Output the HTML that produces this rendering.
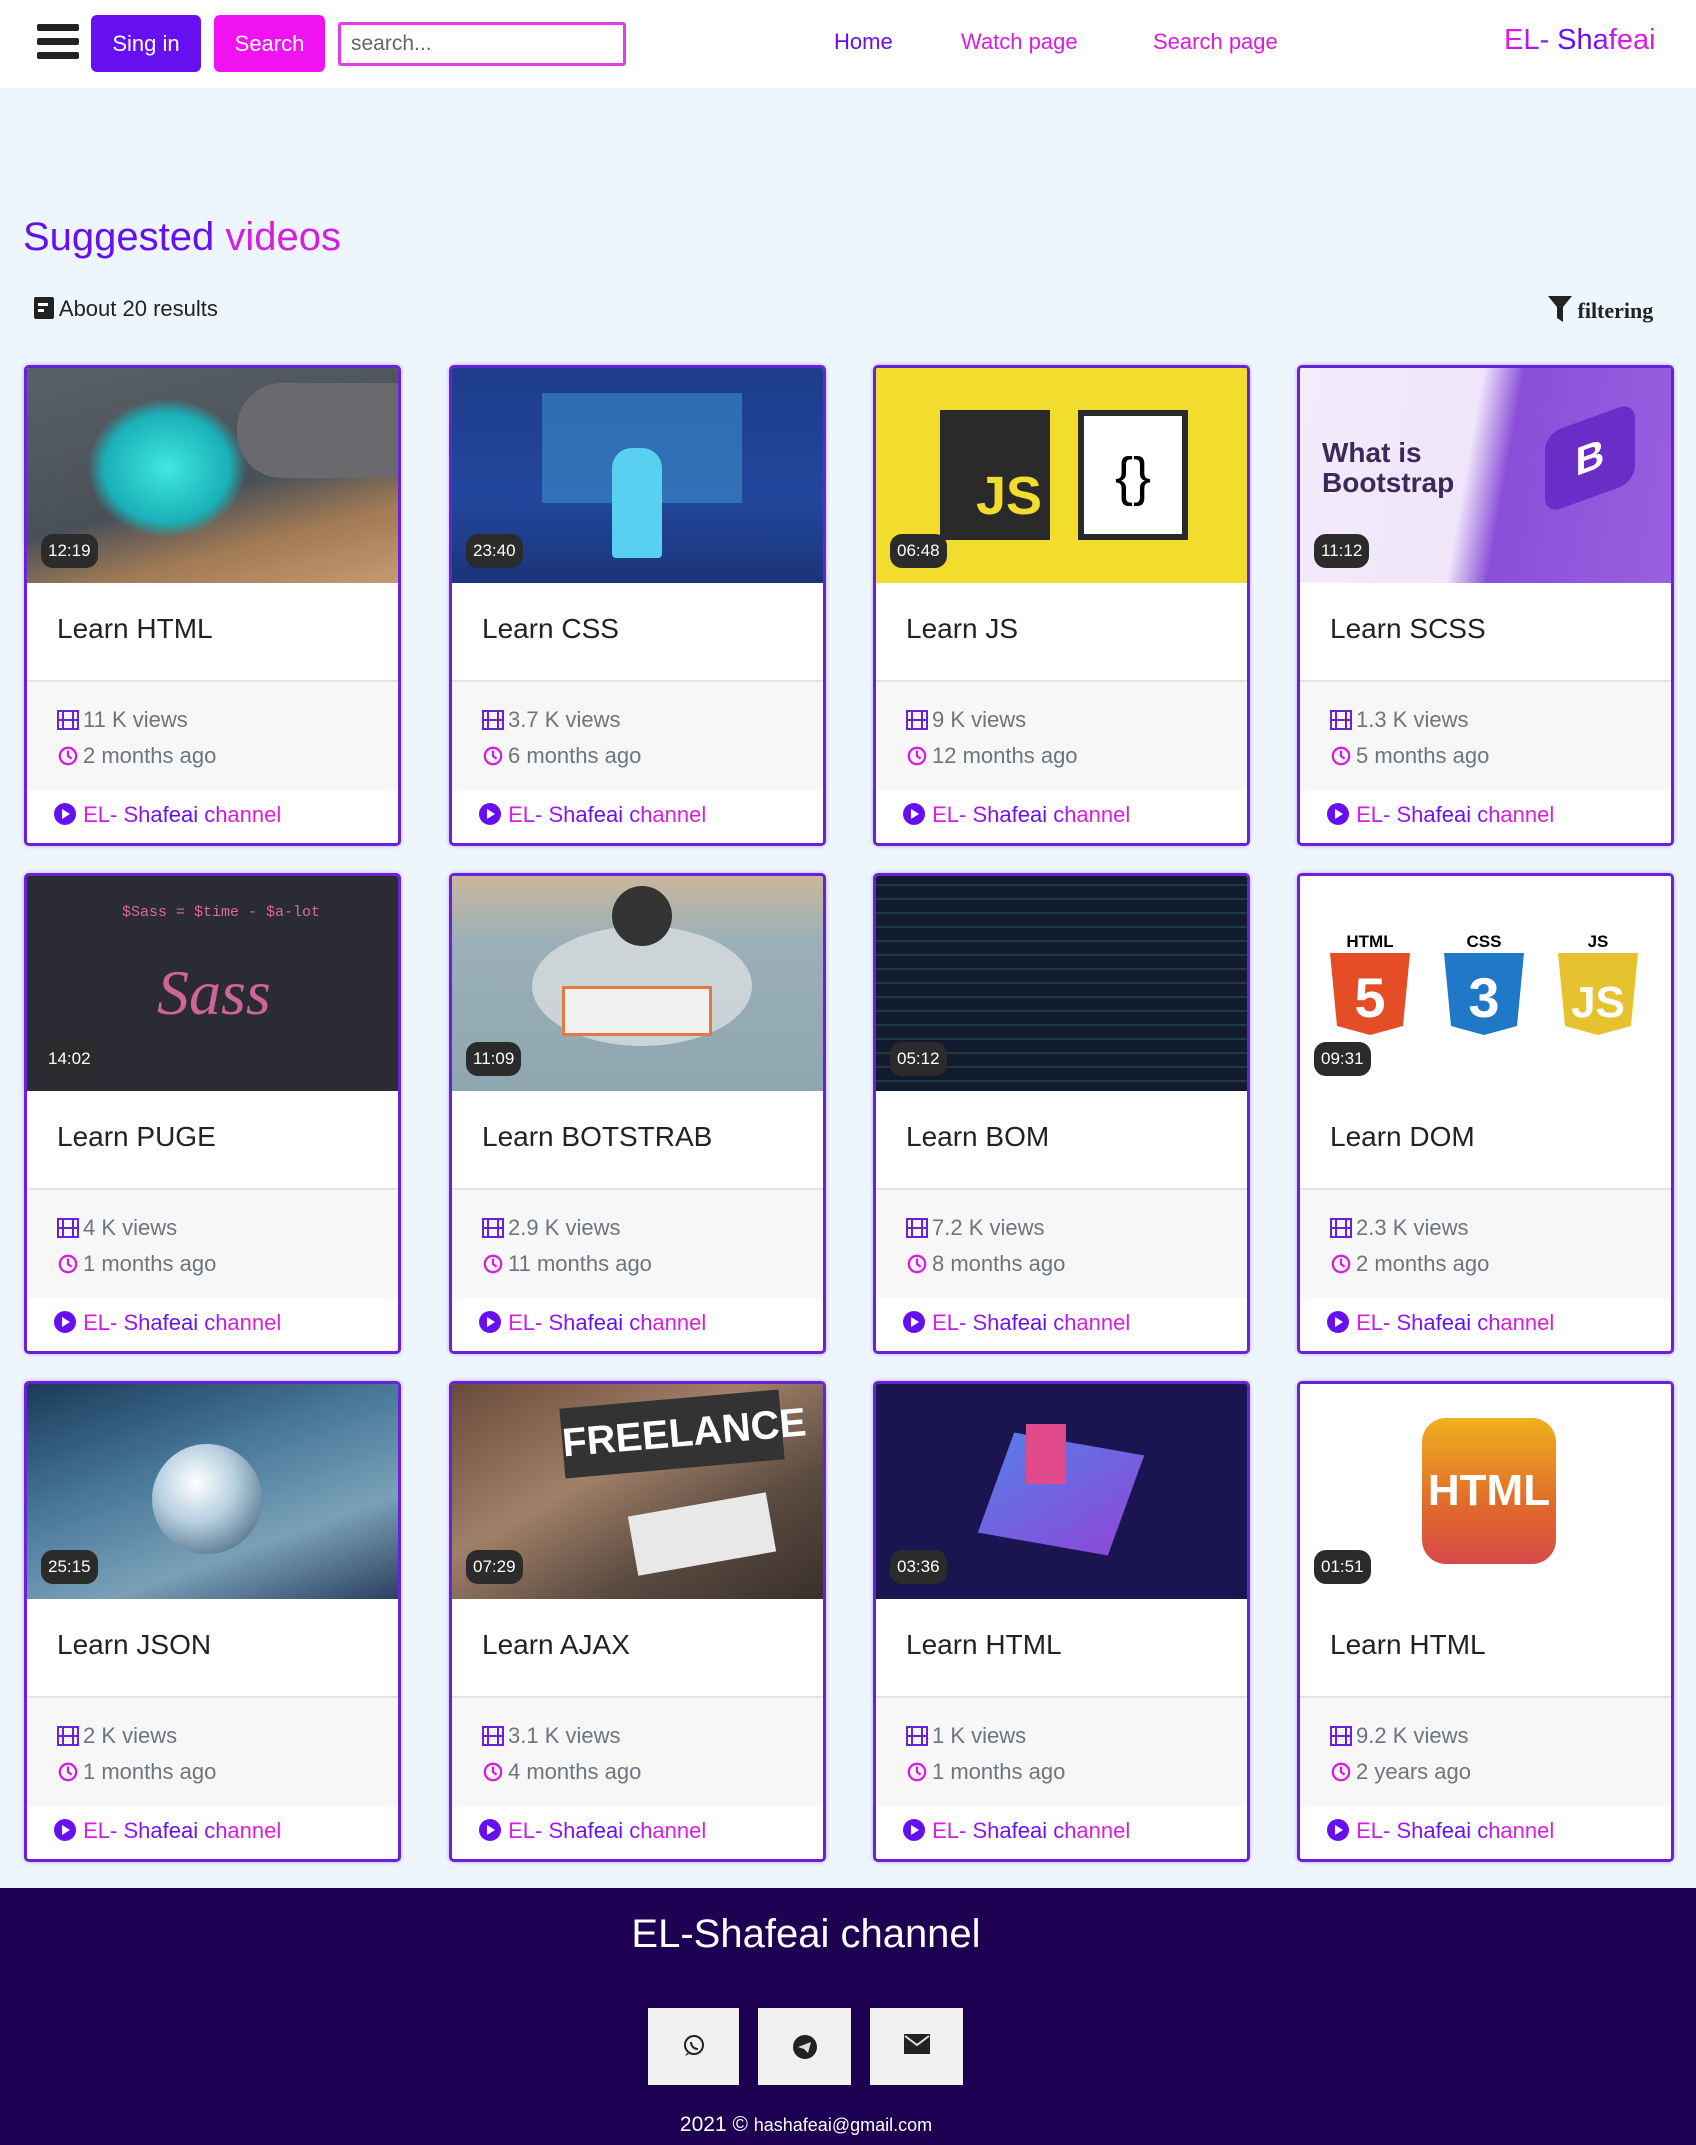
<!DOCTYPE html>
<html><head><meta charset="utf-8"><style>
*{box-sizing:border-box;margin:0;padding:0}
body{width:1696px;height:2145px;background:#eef6fd;font-family:"Liberation Sans",sans-serif;position:relative;overflow:hidden}
.nav{position:absolute;left:0;top:0;width:1696px;height:88px;background:#fff}
.ham{position:absolute;left:37px;top:24px;width:42px}
.ham i{display:block;height:7px;background:#222;border-radius:2px;margin-bottom:7px}
.btn{position:absolute;top:15px;height:57px;border-radius:6px;color:#fff;font-size:22px;line-height:57px;text-align:center}
.inp{position:absolute;left:338px;top:22px;width:288px;height:44px;border:3px solid #e23ee6;border-radius:3px;font-size:21px;color:#666;line-height:38px;padding-left:10px}
.nl{position:absolute;top:29px;font-size:22px}
.grad{background:linear-gradient(90deg,#e61ee6 0%,#6610f2 40%,#6610f2 58%,#d61ee0 75%);-webkit-background-clip:text;background-clip:text;color:transparent}
h1{position:absolute;left:23px;top:215px;font-size:40px;font-weight:normal}
.res{position:absolute;left:34px;top:296px;font-size:22px;color:#222}
.filt{position:absolute;left:1548px;top:296px;font-family:"Liberation Serif",serif;font-weight:bold;font-size:22px;color:#222}
.card{position:absolute;width:377px;height:481px;border:3px solid #6a22d8;border-radius:5px;background:#fff;overflow:hidden;box-shadow:0 0 4px rgba(120,60,220,.4)}
.th{position:absolute;left:0;top:0;width:100%;height:215px;overflow:hidden}
.dur{position:absolute;left:14px;top:166px;background:#2b2b2b;color:#fff;font-size:17px;padding:7px 7px;border-radius:12px}
.tt{position:absolute;left:30px;top:245px;font-size:28px;color:#222}
.st{position:absolute;left:0;top:312px;width:100%;height:110px;background:#f7f7f7;border-top:2px solid #e3e3e3;color:#6c757d;font-size:22px;padding:20px 0 0 30px;line-height:36px}
.ic{display:inline-block;width:22px;height:20px;vertical-align:-3px;margin-right:4px}
.ch{position:absolute;left:26px;top:434px;font-size:22px}
.foot{position:absolute;left:0;top:1888px;width:1696px;height:257px;background:#1e0052}
.fb{position:absolute;top:2008px;height:77px;background:#f0f0f0;text-align:center;padding-top:26px}
.ab{position:absolute}
</style></head><body>
<div class="nav">
<div class="ham"><i></i><i></i><i></i></div>
<div class="btn" style="left:91px;width:110px;background:#6610f2">Sing in</div>
<div class="btn" style="left:214px;width:111px;background:#f012f0">Search</div>
<div class="inp">search...</div>
<div class="nl" style="left:834px;color:#6610f2">Home</div>
<div class="nl" style="left:961px;color:#d61ee0">Watch page</div>
<div class="nl" style="left:1153px;color:#d61ee0">Search page</div>
<div class="nl grad" style="left:1504px;top:24px;font-size:29px">EL- Shafeai</div>
</div>
<h1><span style="color:#6610f2">Suggested</span> <span style="color:#d61ee0">videos</span></h1>
<div class="res"><svg width="20" height="22" viewBox="0 0 20 22" style="vertical-align:-3px"><rect width="20" height="22" rx="2" fill="#222"/><rect x="4" y="6" width="10" height="3" fill="#fff"/><rect x="4" y="12" width="6" height="3" fill="#fff"/></svg> About 20 results</div>
<div class="filt"><svg width="24" height="26" viewBox="0 0 24 26" style="vertical-align:-4px"><path d="M0 0H24L15 11V26L9 22V11Z" fill="#222"/></svg> filtering</div>

<div class="card" style="left:24px;top:365px"><div class="th" style="background:linear-gradient(165deg,#5a6068 0%,#4a5058 55%,#a07a55 75%,#c49a70 100%)"><div class="ab" style="left:60px;top:30px;width:160px;height:140px;background:radial-gradient(#40e8e0,#1ab0b8 55%,transparent 70%)"></div><div class="ab" style="left:210px;top:15px;width:170px;height:95px;background:#6a6a6e;border-radius:45px 0 0 45px"></div></div><div class="dur">12:19</div><div class="tt">Learn HTML</div>
<div class="st"><div><svg class="ic" viewBox="0 0 22 20"><rect x="1" y="1" width="20" height="18" fill="none" stroke="#6a22d8" stroke-width="2"/><path d="M6 1V19M16 1V19M1 10H21" stroke="#6a22d8" stroke-width="2"/></svg>11 K views</div><div><svg class="ic" viewBox="0 0 22 22"><circle cx="11" cy="11" r="9" fill="none" stroke="#d61ee0" stroke-width="2.5"/><path d="M11 5V11L15 14" fill="none" stroke="#d61ee0" stroke-width="2.5"/></svg>2 months ago</div></div>
<div class="ch"><svg width="24" height="24" viewBox="0 0 24 24" style="vertical-align:-4px"><circle cx="12" cy="12" r="11" fill="#6610f2"/><path d="M9 7L17 12L9 17Z" fill="#fff"/></svg> <span class="grad">EL- Shafeai channel</span></div></div>

<div class="card" style="left:449px;top:365px"><div class="th" style="background:linear-gradient(180deg,#1d3c8a,#23479e 60%,#1a3478)"><div class="ab" style="left:90px;top:25px;width:200px;height:110px;background:#3a8ec8;opacity:.6"></div><div class="ab" style="left:160px;top:80px;width:50px;height:110px;background:#5ad0f0;border-radius:20px 20px 4px 4px"></div></div><div class="dur">23:40</div><div class="tt">Learn CSS</div>
<div class="st"><div><svg class="ic" viewBox="0 0 22 20"><rect x="1" y="1" width="20" height="18" fill="none" stroke="#6a22d8" stroke-width="2"/><path d="M6 1V19M16 1V19M1 10H21" stroke="#6a22d8" stroke-width="2"/></svg>3.7 K views</div><div><svg class="ic" viewBox="0 0 22 22"><circle cx="11" cy="11" r="9" fill="none" stroke="#d61ee0" stroke-width="2.5"/><path d="M11 5V11L15 14" fill="none" stroke="#d61ee0" stroke-width="2.5"/></svg>6 months ago</div></div>
<div class="ch"><svg width="24" height="24" viewBox="0 0 24 24" style="vertical-align:-4px"><circle cx="12" cy="12" r="11" fill="#6610f2"/><path d="M9 7L17 12L9 17Z" fill="#fff"/></svg> <span class="grad">EL- Shafeai channel</span></div></div>

<div class="card" style="left:873px;top:365px"><div class="th" style="background:#f2dc2e"><div class="ab" style="left:64px;top:42px;width:110px;height:130px;background:#2a2a2a;color:#f2dc2e;font-size:54px;font-weight:bold;text-align:right;padding:56px 8px 0 0;line-height:60px">JS</div><div class="ab" style="left:202px;top:42px;width:110px;height:130px;background:#fff;border:6px solid #2a2a2a;font-size:54px;text-align:center;padding-top:30px">{}</div></div><div class="dur">06:48</div><div class="tt">Learn JS</div>
<div class="st"><div><svg class="ic" viewBox="0 0 22 20"><rect x="1" y="1" width="20" height="18" fill="none" stroke="#6a22d8" stroke-width="2"/><path d="M6 1V19M16 1V19M1 10H21" stroke="#6a22d8" stroke-width="2"/></svg>9 K views</div><div><svg class="ic" viewBox="0 0 22 22"><circle cx="11" cy="11" r="9" fill="none" stroke="#d61ee0" stroke-width="2.5"/><path d="M11 5V11L15 14" fill="none" stroke="#d61ee0" stroke-width="2.5"/></svg>12 months ago</div></div>
<div class="ch"><svg width="24" height="24" viewBox="0 0 24 24" style="vertical-align:-4px"><circle cx="12" cy="12" r="11" fill="#6610f2"/><path d="M9 7L17 12L9 17Z" fill="#fff"/></svg> <span class="grad">EL- Shafeai channel</span></div></div>

<div class="card" style="left:1297px;top:365px"><div class="th" style="background:linear-gradient(100deg,#f3ecfb 0%,#efe6fa 45%,#8a4fd8 55%,#9a60e0 100%)"><div class="ab" style="left:22px;top:70px;font-size:28px;font-weight:bold;color:#3a2a5a;line-height:30px">What is<br>Bootstrap</div><div class="ab" style="left:245px;top:50px;width:90px;height:80px;background:#6a2dc8;border-radius:16px;transform:skewY(-20deg);color:#fff;font-size:40px;font-weight:bold;text-align:center;line-height:80px">B</div></div><div class="dur">11:12</div><div class="tt">Learn SCSS</div>
<div class="st"><div><svg class="ic" viewBox="0 0 22 20"><rect x="1" y="1" width="20" height="18" fill="none" stroke="#6a22d8" stroke-width="2"/><path d="M6 1V19M16 1V19M1 10H21" stroke="#6a22d8" stroke-width="2"/></svg>1.3 K views</div><div><svg class="ic" viewBox="0 0 22 22"><circle cx="11" cy="11" r="9" fill="none" stroke="#d61ee0" stroke-width="2.5"/><path d="M11 5V11L15 14" fill="none" stroke="#d61ee0" stroke-width="2.5"/></svg>5 months ago</div></div>
<div class="ch"><svg width="24" height="24" viewBox="0 0 24 24" style="vertical-align:-4px"><circle cx="12" cy="12" r="11" fill="#6610f2"/><path d="M9 7L17 12L9 17Z" fill="#fff"/></svg> <span class="grad">EL- Shafeai channel</span></div></div>

<div class="card" style="left:24px;top:873px"><div class="th" style="background:#2b2b33"><div class="ab" style="left:95px;top:28px;font-family:'Liberation Mono',monospace;font-size:15px;color:#d86aa0">$Sass = $time - $a-lot</div><div class="ab" style="left:130px;top:80px;font-family:'Liberation Serif',serif;font-style:italic;font-size:64px;color:#cf649a">Sass</div></div><div class="dur">14:02</div><div class="tt">Learn PUGE</div>
<div class="st"><div><svg class="ic" viewBox="0 0 22 20"><rect x="1" y="1" width="20" height="18" fill="none" stroke="#6a22d8" stroke-width="2"/><path d="M6 1V19M16 1V19M1 10H21" stroke="#6a22d8" stroke-width="2"/></svg>4 K views</div><div><svg class="ic" viewBox="0 0 22 22"><circle cx="11" cy="11" r="9" fill="none" stroke="#d61ee0" stroke-width="2.5"/><path d="M11 5V11L15 14" fill="none" stroke="#d61ee0" stroke-width="2.5"/></svg>1 months ago</div></div>
<div class="ch"><svg width="24" height="24" viewBox="0 0 24 24" style="vertical-align:-4px"><circle cx="12" cy="12" r="11" fill="#6610f2"/><path d="M9 7L17 12L9 17Z" fill="#fff"/></svg> <span class="grad">EL- Shafeai channel</span></div></div>

<div class="card" style="left:449px;top:873px"><div class="th" style="background:linear-gradient(180deg,#c9b79a 0%,#9bb0b8 30%,#8ea6b0 100%)"><div class="ab" style="left:80px;top:50px;width:220px;height:120px;background:#d8dde0;border-radius:50%;opacity:.8"></div><div class="ab" style="left:110px;top:110px;width:150px;height:50px;background:#f0f0f0;border:3px solid #e07a40"></div><div class="ab" style="left:160px;top:10px;width:60px;height:60px;background:#333;border-radius:50%"></div></div><div class="dur">11:09</div><div class="tt">Learn BOTSTRAB</div>
<div class="st"><div><svg class="ic" viewBox="0 0 22 20"><rect x="1" y="1" width="20" height="18" fill="none" stroke="#6a22d8" stroke-width="2"/><path d="M6 1V19M16 1V19M1 10H21" stroke="#6a22d8" stroke-width="2"/></svg>2.9 K views</div><div><svg class="ic" viewBox="0 0 22 22"><circle cx="11" cy="11" r="9" fill="none" stroke="#d61ee0" stroke-width="2.5"/><path d="M11 5V11L15 14" fill="none" stroke="#d61ee0" stroke-width="2.5"/></svg>11 months ago</div></div>
<div class="ch"><svg width="24" height="24" viewBox="0 0 24 24" style="vertical-align:-4px"><circle cx="12" cy="12" r="11" fill="#6610f2"/><path d="M9 7L17 12L9 17Z" fill="#fff"/></svg> <span class="grad">EL- Shafeai channel</span></div></div>

<div class="card" style="left:873px;top:873px"><div class="th" style="background:repeating-linear-gradient(180deg,#121a2e 0 8px,#1e3a3a 8px 10px,#121a2e 10px 14px)"></div><div class="dur">05:12</div><div class="tt">Learn BOM</div>
<div class="st"><div><svg class="ic" viewBox="0 0 22 20"><rect x="1" y="1" width="20" height="18" fill="none" stroke="#6a22d8" stroke-width="2"/><path d="M6 1V19M16 1V19M1 10H21" stroke="#6a22d8" stroke-width="2"/></svg>7.2 K views</div><div><svg class="ic" viewBox="0 0 22 22"><circle cx="11" cy="11" r="9" fill="none" stroke="#d61ee0" stroke-width="2.5"/><path d="M11 5V11L15 14" fill="none" stroke="#d61ee0" stroke-width="2.5"/></svg>8 months ago</div></div>
<div class="ch"><svg width="24" height="24" viewBox="0 0 24 24" style="vertical-align:-4px"><circle cx="12" cy="12" r="11" fill="#6610f2"/><path d="M9 7L17 12L9 17Z" fill="#fff"/></svg> <span class="grad">EL- Shafeai channel</span></div></div>

<div class="card" style="left:1297px;top:873px"><div class="th" style="background:#fff">
<svg class="ab" style="left:30px;top:55px" width="330" height="110" viewBox="0 0 330 110"><text x="40" y="16" font-size="17" font-weight="bold" text-anchor="middle" font-family="Liberation Sans">HTML</text><text x="154" y="16" font-size="17" font-weight="bold" text-anchor="middle" font-family="Liberation Sans">CSS</text><text x="268" y="16" font-size="17" font-weight="bold" text-anchor="middle" font-family="Liberation Sans">JS</text><path d="M0 22H80L73 95L40 104L7 95Z" fill="#e44d26"/><path d="M114 22H194L187 95L154 104L121 95Z" fill="#1f78c8"/><path d="M228 22H308L301 95L268 104L235 95Z" fill="#e6c22e"/><text x="40" y="86" font-size="56" font-weight="bold" fill="#fff" text-anchor="middle" font-family="Liberation Sans">5</text><text x="154" y="86" font-size="56" font-weight="bold" fill="#fff" text-anchor="middle" font-family="Liberation Sans">3</text><text x="268" y="86" font-size="44" font-weight="bold" fill="#fff" text-anchor="middle" font-family="Liberation Sans">JS</text></svg></div><div class="dur">09:31</div><div class="tt">Learn DOM</div>
<div class="st"><div><svg class="ic" viewBox="0 0 22 20"><rect x="1" y="1" width="20" height="18" fill="none" stroke="#6a22d8" stroke-width="2"/><path d="M6 1V19M16 1V19M1 10H21" stroke="#6a22d8" stroke-width="2"/></svg>2.3 K views</div><div><svg class="ic" viewBox="0 0 22 22"><circle cx="11" cy="11" r="9" fill="none" stroke="#d61ee0" stroke-width="2.5"/><path d="M11 5V11L15 14" fill="none" stroke="#d61ee0" stroke-width="2.5"/></svg>2 months ago</div></div>
<div class="ch"><svg width="24" height="24" viewBox="0 0 24 24" style="vertical-align:-4px"><circle cx="12" cy="12" r="11" fill="#6610f2"/><path d="M9 7L17 12L9 17Z" fill="#fff"/></svg> <span class="grad">EL- Shafeai channel</span></div></div>

<div class="card" style="left:24px;top:1381px"><div class="th" style="background:linear-gradient(160deg,#1a3a5a 0%,#4a7a9a 40%,#7aa0b8 70%,#2a4060 100%)"><div class="ab" style="left:125px;top:60px;width:110px;height:110px;border-radius:50%;background:radial-gradient(circle at 40% 35%,#fff,#b8d0e0 40%,#5a7890 80%)"></div></div><div class="dur">25:15</div><div class="tt">Learn JSON</div>
<div class="st"><div><svg class="ic" viewBox="0 0 22 20"><rect x="1" y="1" width="20" height="18" fill="none" stroke="#6a22d8" stroke-width="2"/><path d="M6 1V19M16 1V19M1 10H21" stroke="#6a22d8" stroke-width="2"/></svg>2 K views</div><div><svg class="ic" viewBox="0 0 22 22"><circle cx="11" cy="11" r="9" fill="none" stroke="#d61ee0" stroke-width="2.5"/><path d="M11 5V11L15 14" fill="none" stroke="#d61ee0" stroke-width="2.5"/></svg>1 months ago</div></div>
<div class="ch"><svg width="24" height="24" viewBox="0 0 24 24" style="vertical-align:-4px"><circle cx="12" cy="12" r="11" fill="#6610f2"/><path d="M9 7L17 12L9 17Z" fill="#fff"/></svg> <span class="grad">EL- Shafeai channel</span></div></div>

<div class="card" style="left:449px;top:1381px"><div class="th" style="background:linear-gradient(150deg,#6a4a3a 0%,#a08068 40%,#5a4a40 70%,#3a302a 100%)"><div class="ab" style="left:110px;top:15px;width:220px;height:70px;background:#333;transform:rotate(-5deg);color:#fff;font-size:40px;font-weight:bold;text-align:center;line-height:70px">FREELANCE</div><div class="ab" style="left:180px;top:120px;width:140px;height:60px;background:#e8e8e8;transform:rotate(-10deg)"></div></div><div class="dur">07:29</div><div class="tt">Learn AJAX</div>
<div class="st"><div><svg class="ic" viewBox="0 0 22 20"><rect x="1" y="1" width="20" height="18" fill="none" stroke="#6a22d8" stroke-width="2"/><path d="M6 1V19M16 1V19M1 10H21" stroke="#6a22d8" stroke-width="2"/></svg>3.1 K views</div><div><svg class="ic" viewBox="0 0 22 22"><circle cx="11" cy="11" r="9" fill="none" stroke="#d61ee0" stroke-width="2.5"/><path d="M11 5V11L15 14" fill="none" stroke="#d61ee0" stroke-width="2.5"/></svg>4 months ago</div></div>
<div class="ch"><svg width="24" height="24" viewBox="0 0 24 24" style="vertical-align:-4px"><circle cx="12" cy="12" r="11" fill="#6610f2"/><path d="M9 7L17 12L9 17Z" fill="#fff"/></svg> <span class="grad">EL- Shafeai channel</span></div></div>

<div class="card" style="left:873px;top:1381px"><div class="th" style="background:#1a1450"><div class="ab" style="left:120px;top:60px;width:130px;height:100px;background:linear-gradient(135deg,#5a7ae8,#8a4ad8);transform:skew(-20deg,10deg)"></div><div class="ab" style="left:150px;top:40px;width:40px;height:60px;background:#e04a8a"></div></div><div class="dur">03:36</div><div class="tt">Learn HTML</div>
<div class="st"><div><svg class="ic" viewBox="0 0 22 20"><rect x="1" y="1" width="20" height="18" fill="none" stroke="#6a22d8" stroke-width="2"/><path d="M6 1V19M16 1V19M1 10H21" stroke="#6a22d8" stroke-width="2"/></svg>1 K views</div><div><svg class="ic" viewBox="0 0 22 22"><circle cx="11" cy="11" r="9" fill="none" stroke="#d61ee0" stroke-width="2.5"/><path d="M11 5V11L15 14" fill="none" stroke="#d61ee0" stroke-width="2.5"/></svg>1 months ago</div></div>
<div class="ch"><svg width="24" height="24" viewBox="0 0 24 24" style="vertical-align:-4px"><circle cx="12" cy="12" r="11" fill="#6610f2"/><path d="M9 7L17 12L9 17Z" fill="#fff"/></svg> <span class="grad">EL- Shafeai channel</span></div></div>

<div class="card" style="left:1297px;top:1381px"><div class="th" style="background:#fff"><div class="ab" style="left:122px;top:34px;width:134px;height:146px;border-radius:24px;background:linear-gradient(180deg,#f0b020,#e06a2a 60%,#d84a4a);color:#fff;font-size:44px;font-weight:bold;text-align:center;line-height:146px">HTML</div></div><div class="dur">01:51</div><div class="tt">Learn HTML</div>
<div class="st"><div><svg class="ic" viewBox="0 0 22 20"><rect x="1" y="1" width="20" height="18" fill="none" stroke="#6a22d8" stroke-width="2"/><path d="M6 1V19M16 1V19M1 10H21" stroke="#6a22d8" stroke-width="2"/></svg>9.2 K views</div><div><svg class="ic" viewBox="0 0 22 22"><circle cx="11" cy="11" r="9" fill="none" stroke="#d61ee0" stroke-width="2.5"/><path d="M11 5V11L15 14" fill="none" stroke="#d61ee0" stroke-width="2.5"/></svg>2 years ago</div></div>
<div class="ch"><svg width="24" height="24" viewBox="0 0 24 24" style="vertical-align:-4px"><circle cx="12" cy="12" r="11" fill="#6610f2"/><path d="M9 7L17 12L9 17Z" fill="#fff"/></svg> <span class="grad">EL- Shafeai channel</span></div></div>

<div class="foot"></div>
<div class="ab" style="left:0;top:1912px;width:1612px;text-align:center;color:#fff;font-size:40px">EL-Shafeai channel</div>
<div class="fb" style="left:648px;width:91px"><svg width="24" height="24" viewBox="0 0 24 24"><circle cx="12" cy="11" r="9" fill="none" stroke="#222" stroke-width="2"/><path d="M5 19L3 22L7 20" fill="#222"/><path d="M9 8C9 12 12 15 16 15" stroke="#222" stroke-width="2" fill="none"/></svg></div>
<div class="fb" style="left:758px;width:93px"><svg width="26" height="26" viewBox="0 0 26 26"><circle cx="13" cy="13" r="12" fill="#222"/><path d="M6 13L19 8L16 19L12 15Z" fill="#ddd"/></svg></div>
<div class="fb" style="left:870px;width:93px"><svg width="26" height="20" viewBox="0 0 26 20"><rect width="26" height="20" fill="#222"/><path d="M1 2L13 11L25 2" stroke="#ddd" stroke-width="2" fill="none"/></svg></div>
<div class="ab" style="left:0;top:2113px;width:1612px;text-align:center;color:#fff;font-size:21px">2021 © <span style="font-size:18px">hashafeai@gmail.com</span></div>
</body></html>
